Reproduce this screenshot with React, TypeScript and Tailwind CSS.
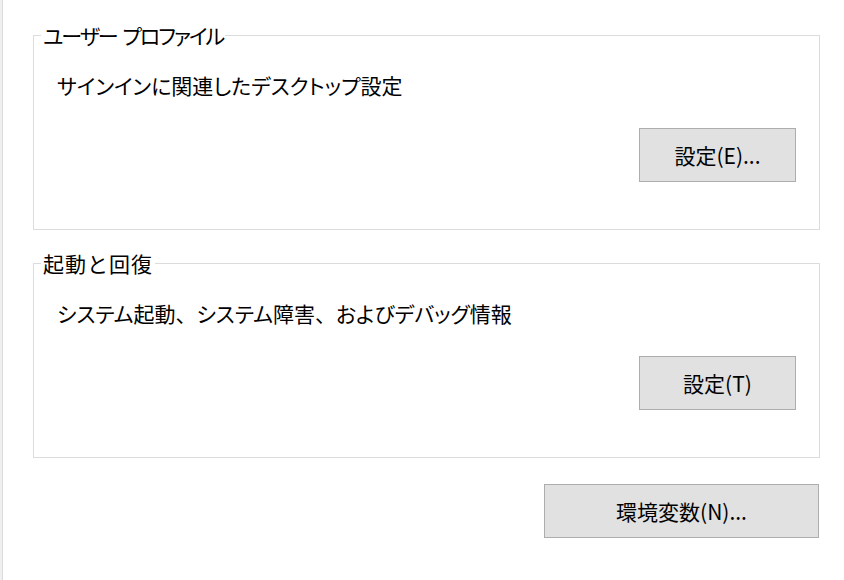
import type { ReactNode } from 'react';

interface GroupBoxProps {
  title: ReactNode;
  titleClass: string;
  description: ReactNode;
  children: ReactNode;
}

function GroupBox({ title, titleClass, description, children }: GroupBoxProps) {
  return (
    <fieldset className="w-[787px] border border-[#dcdcdc] pb-[47px]">
      <legend className={`ml-[7px] px-[2px] text-[21px] leading-[24px] ${titleClass}`}>{title}</legend>
      <p className="mt-[26px] ml-[23px] text-[21px] leading-[24px] [font-feature-settings:'palt']">
        {description}
      </p>
      <div className="mt-[31px] flex justify-end pr-[23px]">{children}</div>
    </fieldset>
  );
}

function DialogButton({ label, width }: { label: string; width: string }) {
  return (
    <button
      type="button"
      className={`${width} h-[54px] border border-[#adadad] bg-[#e1e1e1] text-[21px] leading-[24px] text-black`}
    >
      {label}
    </button>
  );
}

// 読点は全角幅のまま
const Comma = () => <span className="[font-feature-settings:normal]">、</span>;

export default function App() {
  return (
    <div className="flex h-[580px] w-[844px] bg-white text-black font-['Noto_Sans_CJK_JP','Noto_Sans',sans-serif]">
      <div className="w-[2px] bg-[#f0f0f0] border-r border-[#dadada] box-content" />
      <div className="flex flex-col pl-[30px] pt-[23px]">
        <GroupBox
          title={
            <>
              ユーザー<span className="inline-block w-[6px]" />プロファイル
            </>
          }
          titleClass="[font-feature-settings:'palt'] tracking-[-2px]"
          description="サインインに関連したデスクトップ設定"
        >
          <DialogButton label="設定(E)..." width="w-[157px]" />
        </GroupBox>
        <div className="mt-[21px]">
          <GroupBox
            title="起動と回復"
            titleClass="tracking-[1px]"
            description={
              <>
                システム起動<Comma />システム障害<Comma />およびデバッグ情報
              </>
            }
          >
            <DialogButton label="設定(T)" width="w-[157px]" />
          </GroupBox>
        </div>
        <div className="mt-[26px] flex justify-end pr-[1px]">
          <DialogButton label="環境変数(N)..." width="w-[275px]" />
        </div>
      </div>
    </div>
  );
}
